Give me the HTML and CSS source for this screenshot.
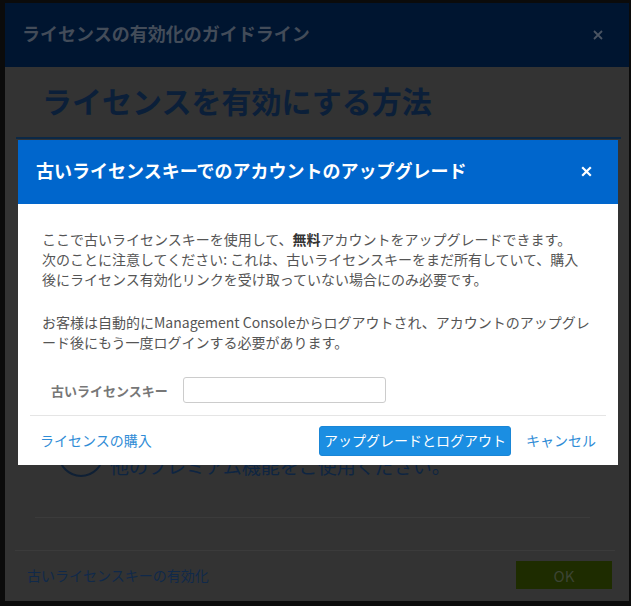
FILE: index.html
```html
<!DOCTYPE html>
<html lang="ja">
<head>
<meta charset="utf-8">
<title>ライセンス</title>
<link rel="stylesheet" href="styles.css">
</head>
<body>
<div class="page">
  <div class="bg-dialog">
    <div class="bg-header">
      <span class="bg-title">ライセンスの有効化のガイドライン</span>
      <svg class="bg-close" width="10" height="10" viewBox="0 0 10 10"><path d="M1 1L9 9M9 1L1 9" stroke="#4a5462" stroke-width="1.8" fill="none"/></svg>
    </div>
    <div class="bg-body">
      <h1 class="bg-h1">ライセンスを有効にする方法</h1>
      <div class="bg-card">
        <div class="bg-feature">
          <span class="bg-circle"></span>
          <span class="bg-feature-text">他のプレミアム機能をご使用ください。</span>
        </div>
      </div>
      <div class="bg-sep"></div>
    </div>
    <div class="bg-footer">
      <span class="bg-link">古いライセンスキーの有効化</span>
      <span class="bg-ok">OK</span>
    </div>
  </div>
</div>

<div class="modal">
  <div class="modal-header">
    <span class="modal-title">古いライセンスキーでのアカウントのアップグレード</span>
    <svg class="modal-close" width="11" height="11" viewBox="0 0 11 11"><path d="M1.2 1.2L9.8 9.8M9.8 1.2L1.2 9.8" stroke="#ffffff" stroke-width="2.2" fill="none"/></svg>
  </div>
  <div class="modal-body">
    <p class="para">ここで古いライセンスキーを使用して、<b>無料</b>アカウントをアップグレードできます。<br>次のことに注意してください: これは、古いライセンスキーをまだ所有していて、購入後にライセンス有効化リンクを受け取っていない場合にのみ必要です。</p>
    <p class="para">お客様は自動的にManagement Consoleからログアウトされ、アカウントのアップグレード後にもう一度ログインする必要があります。</p>
    <div class="form-row">
      <label class="form-label">古いライセンスキー</label>
      <input class="form-input" type="text">
    </div>
  </div>
  <div class="modal-footer">
    <a class="link">ライセンスの購入</a>
    <span class="spacer"></span>
    <span class="btn-primary">アップグレードとログアウト</span>
    <a class="link cancel">キャンセル</a>
  </div>
</div>
</body>
</html>
```

FILE: styles.css
```css
* { box-sizing: border-box; }
html, body {
  margin: 0;
  padding: 0;
  background: #0b0b0b;
  width: 631px;
  height: 606px;
  overflow: hidden;
  font-family: "Noto Sans CJK JP", "Noto Sans", sans-serif;
}
.page {
  padding: 3px 2px 0 5px;
}
.bg-dialog {
  width: 624px;
  height: 598px;
  background: #333333;
}
.bg-header {
  height: 64px;
  background: #001530;
  display: flex;
  align-items: center;
  justify-content: space-between;
  padding: 0 26px 4px 17px;
}
.bg-title {
  font-size: 18px;
  font-weight: bold;
  color: #434c59;
}
.bg-close {
  margin-top: 4px;
}
.bg-body {
  height: 483px;
  padding-top: 15px;
}
.bg-h1 {
  margin: 0 0 0 37px;
  font-size: 30px;
  line-height: 36px;
  font-weight: bold;
  color: #0b1f39;
}
.bg-card {
  margin: 19px 8px 0 11px;
  height: 380px;
  border-top: 2px solid #0b2846;
  padding: 292px 0 0 42px;
}
.bg-feature {
  display: flex;
  align-items: flex-start;
  gap: 6px;
}
.bg-circle {
  width: 46px;
  height: 46px;
  border: 2px solid #0f2035;
  border-radius: 50%;
  flex: none;
}
.bg-feature-text {
  font-size: 19px;
  line-height: 28px;
  margin-top: 21px;
  color: #0e2542;
}
.bg-sep {
  height: 1px;
  margin: 0 39px 0 30px;
  background: #3b3b3b;
}
.bg-footer {
  height: 50px;
  margin: 0 14px 0 10px;
  border-top: 1px solid #3b3b3b;
  display: flex;
  align-items: center;
  justify-content: space-between;
  padding: 0 3px 0 12px;
}
.bg-link {
  font-size: 14px;
  color: #10294a;
  margin-bottom: 2px;
}
.bg-ok {
  width: 96px;
  height: 28px;
  margin-bottom: 1px;
  background: #1e2c00;
  color: #3c4433;
  font-size: 15px;
  display: flex;
  align-items: center;
  justify-content: center;
}

.modal {
  position: absolute;
  left: 18px;
  top: 140px;
  width: 600px;
  background: #ffffff;
}
.modal-header {
  height: 64px;
  background: #0066cc;
  display: flex;
  align-items: center;
  justify-content: space-between;
  padding: 0 26px 5px 18px;
}
.modal-title {
  color: #ffffff;
  font-size: 18px;
  font-weight: bold;
}
.modal-close {
  margin-top: 3px;
}
.modal-body {
  padding: 25px 28px 0 24px;
}
.para {
  margin: 0 0 23px;
  font-size: 14px;
  line-height: 20px;
  color: #555555;
}
.para b {
  color: #333333;
}
.para:last-of-type {
  margin-bottom: 0;
}
.form-row {
  display: flex;
  align-items: center;
  margin-top: 25px;
  padding-left: 9px;
}
.form-label {
  width: 132px;
  font-size: 13px;
  font-weight: bold;
  color: #777777;
}
.form-input {
  width: 203px;
  height: 26px;
  border: 1px solid #cccccc;
  border-radius: 3px;
  margin: 0;
  padding: 0 6px;
  background: #ffffff;
}
.modal-footer {
  margin: 12px 12px 0;
  border-top: 1px solid #e5e5e5;
  padding: 10px 10px 9px;
  display: flex;
  align-items: center;
}
.spacer { flex: 1; }
.link {
  font-size: 14px;
  color: #2f8cd6;
  margin-bottom: 2px;
}
.btn-primary {
  height: 30px;
  padding: 0 4px 2px;
  background: #1b8ee2;
  border: 1px solid #1a86d6;
  border-radius: 3px;
  color: #ffffff;
  font-size: 14px;
  display: flex;
  align-items: center;
}
.cancel {
  margin-left: 15px;
}
```
